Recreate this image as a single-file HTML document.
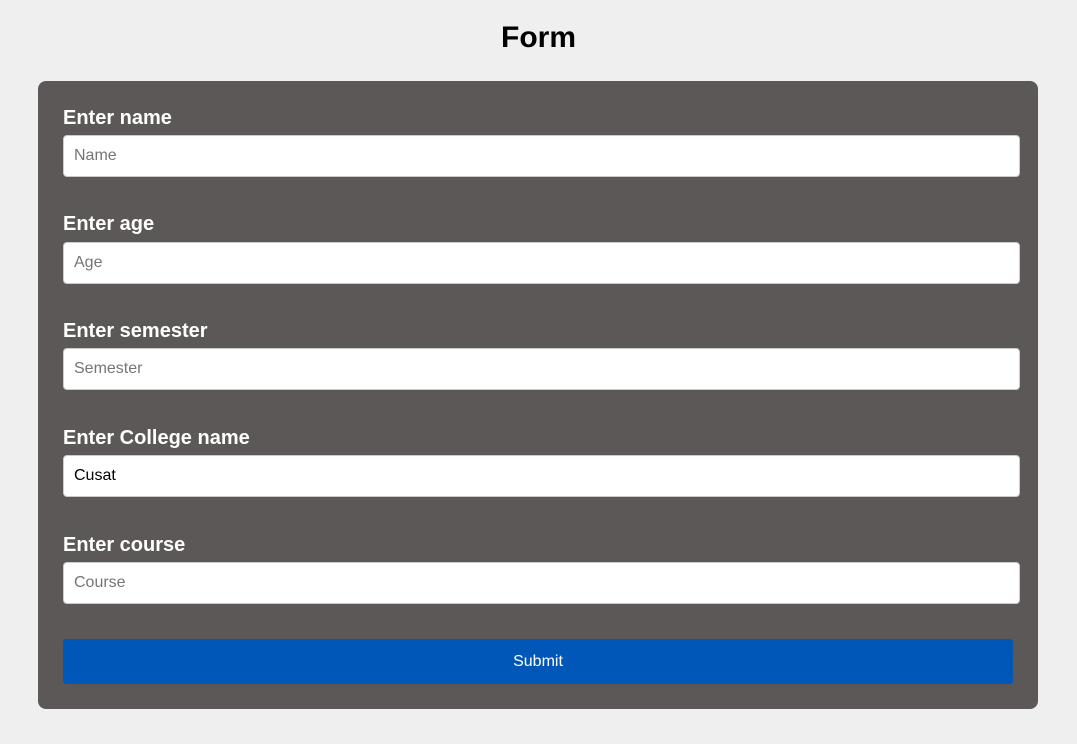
<!DOCTYPE html>
<html><head><style>
body{margin:0;background:#efefef;font-family:"Liberation Sans",Arial,sans-serif;width:1077px;height:744px;overflow:hidden;position:relative}
h1{position:absolute;top:20px;left:0;width:1077px;margin:0;text-align:center;font-size:30px;font-weight:bold;color:#000;line-height:36px}
.card{position:absolute;left:38px;top:81px;width:1000px;height:628px;background:#5c5857;border-radius:8px}
.lbl{position:absolute;left:25px;color:#fff;font-weight:bold;font-size:20px;line-height:24px}
.in{position:absolute;left:25px;height:40px;background:#fff;border:1px solid #ccc;border-radius:4px;font-size:16px;line-height:40px;padding-left:10px;box-sizing:content-box;width:945px;color:#757575}
.btn{position:absolute;left:25px;top:558px;width:950px;height:45px;background:#0057b7;border-radius:3px;color:#fff;font-size:16px;text-align:center;line-height:45px}
</style></head><body>
<h1>Form</h1>
<div class="card">
<div class="lbl" style="top:25px">Enter name</div><div class="in" style="top:54px">Name</div>
<div class="lbl" style="top:131px">Enter age</div><div class="in" style="top:161px">Age</div>
<div class="lbl" style="top:238px">Enter semester</div><div class="in" style="top:267px">Semester</div>
<div class="lbl" style="top:345px">Enter College name</div><div class="in" style="top:374px;color:#000">Cusat</div>
<div class="lbl" style="top:452px">Enter course</div><div class="in" style="top:481px">Course</div>
<div class="btn">Submit</div>
</div>
</body></html>
